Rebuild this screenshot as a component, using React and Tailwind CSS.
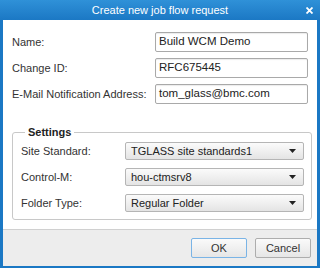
import React from "react";

const font = { fontFamily: "'Liberation Sans', Arial, sans-serif" };

const TextRow = ({ label, value }) => (
  <div className="flex items-center">
    <label className="w-[144px] text-[11px] text-[#333] whitespace-nowrap">{label}</label>
    <div className="w-[154px] h-[20px] border border-[#a9a9a9] rounded-[2px] bg-white flex items-center px-[3px] text-[11.5px] text-[#222] shadow-[inset_0_1px_1px_rgba(0,0,0,0.08)]">
      {value}
    </div>
  </div>
);

const SelectRow = ({ label, value }) => (
  <div className="flex items-center">
    <label className="w-[104px] text-[11px] text-[#333]">{label}</label>
    <div className="w-[179px] h-[18px] border border-[#b5b5b5] rounded-[2px] bg-gradient-to-b from-[#fbfbfb] to-[#e4e4e4] flex items-center justify-between pl-[5px] pr-[7px] text-[11px] text-[#222]">
      <span>{value}</span>
      <svg width="7" height="4" viewBox="0 0 7 4">
        <path d="M0 0h7L3.5 4z" fill="#222" />
      </svg>
    </div>
  </div>
);

const App = () => {
  return (
    <div
      className="w-[320px] h-[268px] bg-[#1b78c4] flex flex-col px-[3px] pb-[2px]"
      style={font}
    >
      <div className="h-[20px] shrink-0 relative flex items-center justify-center text-white text-[11px] bg-gradient-to-b from-[#2f91d8] to-[#1b78c4] -mx-[3px]">
        Create new job flow request
        <svg
          className="absolute right-[7px] top-[7px]"
          width="7"
          height="7"
          viewBox="0 0 7 7"
        >
          <path d="M0.5 0.5l6 6M6.5 0.5l-6 6" stroke="#fff" strokeWidth="1.8" />
        </svg>
      </div>

      <div className="flex-1 bg-white flex flex-col">
        <div className="pt-[12px] px-[9px] flex flex-col gap-[6px]">
          <TextRow label="Name:" value="Build WCM Demo" />
          <TextRow label="Change ID:" value="RFC675445" />
          <TextRow label="E-Mail Notification Address:" value="tom_glass@bmc.com" />
        </div>

        <fieldset className="mt-[21px] mx-[9px] border border-[#c8c8c8] rounded-[3px] pl-[8px] pr-[7px] pb-[7px]">
          <legend className="ml-[4px] px-[3px] text-[11px] font-bold text-[#222] leading-[14px]">
            Settings
          </legend>
          <div className="pt-[3px] flex flex-col gap-[8px]">
            <SelectRow label="Site Standard:" value="TGLASS site standards1" />
            <SelectRow label="Control-M:" value="hou-ctmsrv8" />
            <SelectRow label="Folder Type:" value="Regular Folder" />
          </div>
        </fieldset>

        <div className="mt-auto h-[37px] bg-[#ededed] border-t border-[#d0d0d0] flex items-start justify-end gap-[8px] pt-[8px] pr-[6px]">
          <button className="w-[56px] h-[20px] border border-[#7ab4e6] rounded-[2px] bg-gradient-to-b from-[#fafafa] to-[#e6e6e6] text-[11px] text-[#333]">
            OK
          </button>
          <button className="w-[56px] h-[20px] border border-[#adadad] rounded-[2px] bg-gradient-to-b from-[#fafafa] to-[#e6e6e6] text-[11px] text-[#333]">
            Cancel
          </button>
        </div>
      </div>
    </div>
  );
};

export default App;
